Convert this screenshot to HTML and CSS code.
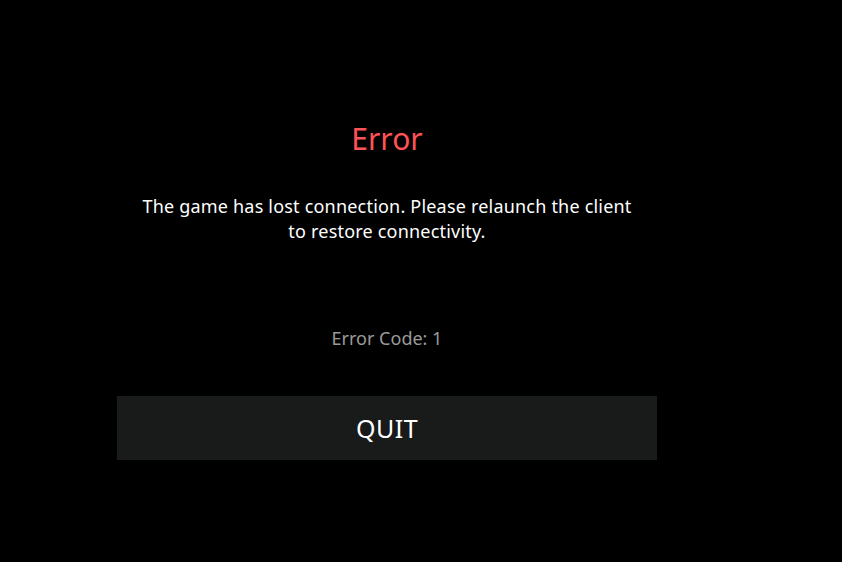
FILE: index.html
```html
<html>
  <head>
    <title>Error</title>
    <link rel="stylesheet" href="styles.css">
  </head>
  <body>
    <div class="errorBox">
      <h1 class="errorTitle">Error</h1>
      <p class="errorText">The game has lost connection. Please relaunch the client<br>to restore connectivity.</p>
      <p class="errorCode">Error Code: 1</p>
      <button class="quitButton">QUIT</button>
    </div>
  </body>
</html>
```

FILE: styles.css
```css
body {
  margin: 0;
  background-color: #000;
  font-family: "Noto Sans", "DejaVu Sans", sans-serif;
  color: #fff;
}

.errorBox {
  width: 540px;
  margin-left: 117px;
  padding-top: 118px;
  display: flex;
  flex-direction: column;
  align-items: center;
  text-align: center;
}

.errorTitle {
  margin: 0;
  font-size: 30px;
  font-weight: normal;
  color: #ff5257;
  line-height: 42px;
}

.errorText {
  margin: 34px 0 0 0;
  font-size: 18px;
  line-height: 25px;
  letter-spacing: 0.2px;
}

.errorCode {
  margin: 82px 0 0 0;
  font-size: 18px;
  line-height: 25px;
  color: #9a9a9a;
}

.quitButton {
  margin-top: 45px;
  width: 540px;
  height: 64px;
  border: none;
  background-color: #191a1a;
  color: #fff;
  font-family: "Noto Sans", "DejaVu Sans", sans-serif;
  font-size: 25px;
  letter-spacing: 0.5px;
}
```
